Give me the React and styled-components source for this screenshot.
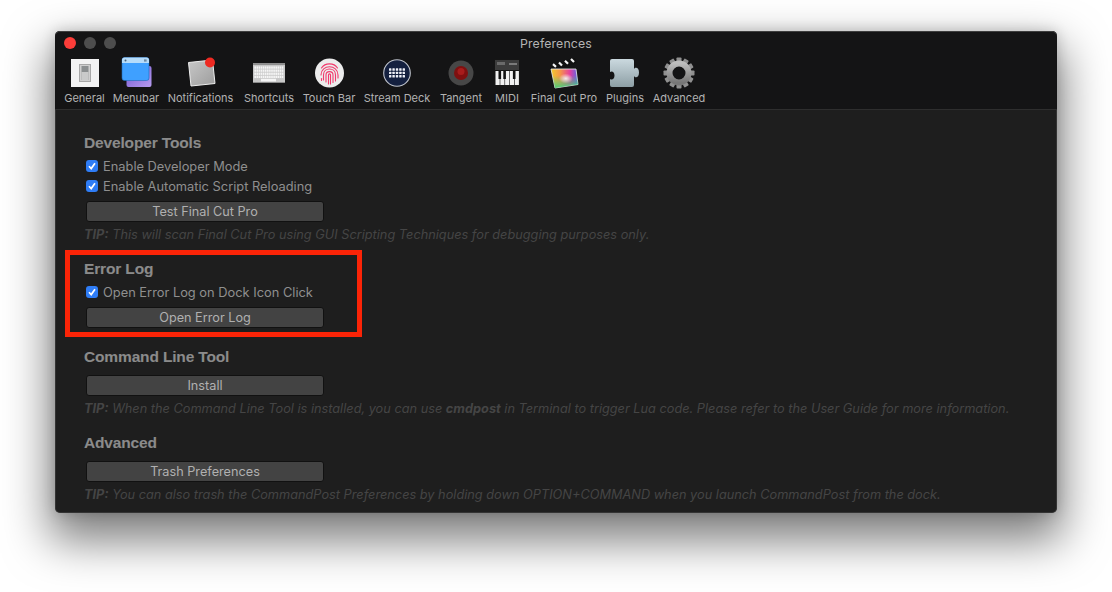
import React from "react";
import styled, { createGlobalStyle } from "styled-components";

const Global = createGlobalStyle`
  html, body { margin: 0; padding: 0; background: #fff; overflow: hidden; }
  body { font-family: "Inter", "Liberation Sans", sans-serif; }
`;
const Page = styled.div`
  width: 1112px; height: 592px; padding: 31px 0 0 55px; box-sizing: border-box; overflow: hidden;
`;
const Window = styled.div`
  position: relative; width: 1002px; height: 482px; border-radius: 5px; background: #1e1e1e;
  box-shadow: inset 0 0 0 1px rgba(80,80,80,.45), 0 22px 45px 6px rgba(0,0,0,.5), 0 0 14px rgba(0,0,0,.18);
  display: flex; flex-direction: column; overflow: visible;
`;
const Head = styled.header`
  height: 78px; background: #141415; border-bottom: 1px solid #2e2e2e; border-radius: 5px 5px 0 0;
  box-shadow: inset 0 1px 0 rgba(90,90,90,.6);
  flex: none; display: flex; flex-direction: column; box-sizing: content-box;
`;
const TitleBar = styled.div`
  position: relative; height: 24px; flex: none; display: flex; align-items: center; justify-content: center;
`;
const Title = styled.div`font-size: 12.3px; letter-spacing: .15px; color: #b4b4b4; margin-top: 1px;`;
const Lights = styled.div`position: absolute; left: 9px; top: 6px; display: flex; gap: 8px;`;
const Light = styled.span`width: 12px; height: 12px; border-radius: 50%; background: ${p => p.$c};`;
const Tools = styled.nav`display: flex; height: 54px;`;
const Tool = styled.div`
  width: ${p => p.$w}px; flex: none; display: flex; flex-direction: column; align-items: center;
  position: relative;
`;
const IconSlot = styled.div`
  height: 32px; width: 36px; margin-top: 2px; display: flex; align-items: center; justify-content: center; flex: none;
`;
const ToolLabel = styled.div`
  margin-top: 3px; font-size: 11px; line-height: 13px; color: #b2b2b2; white-space: nowrap;
`;
const Body = styled.main`
  flex: 1; padding: 23px 0 0 29px; position: relative; min-height: 0;
`;
const Section = styled.section`
  height: ${p => p.$h}px; display: flex; flex-direction: column; align-items: flex-start;
`;
const Heading = styled.h2`
  margin: 0 0 4px; font-size: 15.5px; line-height: 19px; font-weight: 700; color: #8b8b8b; letter-spacing: -.15px;
  font-family: "Liberation Sans", sans-serif; -webkit-text-stroke: .1px #8b8b8b;
`;
const CheckRow = styled.label`
  height: 20px; display: flex; align-items: center; gap: 5px; padding-left: 2px; flex: none;
  font-size: 12.85px; color: #8f8f8f;
`;
const Box = styled.span`
  width: 12px; height: 12px; border-radius: 3px; background: #2f7df6; display: flex; align-items: center; justify-content: center; flex: none;
`;
const Button = styled.button`
  margin: 5px 0 0 2px; width: 238px; height: 21px; padding: 0; flex: none; box-sizing: border-box;
  border: 1px solid #111; border-radius: 3px; background: #434343; color: #b0b0b0;
  font: 12.7px "Inter", "Liberation Sans", sans-serif; line-height: 18px; text-align: center;
`;
const Tip = styled.p`
  margin: 5px 0 0; font-size: 12.75px; line-height: 15px; font-style: italic; color: #454545; white-space: nowrap;
  font-family: "Inter", "Liberation Sans", sans-serif;
  b { font-weight: 700; }
`;
const Callout = styled.div`
  position: absolute; left: 10px; top: 140px; width: 297px; height: 87px; box-sizing: border-box;
  border: 5px solid #fb2407; pointer-events: none;
`;

const Check = () => (
  <svg width="10" height="10" viewBox="0 0 10 10"><path d="M2 5.2 4.2 7.6 8 2.2" fill="none" stroke="#fff" strokeWidth="1.7" /></svg>
);

const General = () => (
  <svg width="28" height="28" viewBox="0 0 28 28">
    <rect width="28" height="28" x="0" y="0" fill="#f3f3f3" />
    <rect x="8.5" y="5.5" width="11" height="17" fill="#cfcfcf" stroke="#a8a8a8" />
    <rect x="10.5" y="7" width="7" height="14" fill="#8b8f90" />
    <rect x="10.5" y="13" width="7" height="8" fill="#c9caca" />
  </svg>
);
const Menubar = () => (
  <svg width="32" height="32" viewBox="-1.5 0 32 32">
    <defs>
      <linearGradient id="mb1" x1="0" y1="0" x2="1" y2="1"><stop offset="0" stopColor="#7457d0" /><stop offset="1" stopColor="#b79cf0" /></linearGradient>
    </defs>
    <rect x="5" y="9" width="25" height="21" rx="2" fill="url(#mb1)" />
    <rect x="0.5" y="0.5" width="27" height="23" rx="2.5" fill="#3fa0ff" stroke="#1e69b5" strokeWidth=".6" />
    <path d="M.5 3A2.500 2.500 0 0 1 3 .5h22A2.500 2.500 0 0 1 27.500 3v3H.5z" fill="#b6dcfa" />
    <circle cx="4" cy="3.500" r="1" fill="#45617a" />
    <rect x="22.500" y="2.400" width="2.600" height="2.200" fill="#6b8aa5" />
  </svg>
);
const Notifications = () => (
  <svg width="32" height="32" viewBox="-1 0 32 32">
    <defs>
      <linearGradient id="n1" x1="0" y1="0" x2="1" y2="1"><stop offset="0" stopColor="#c8c8c8" /><stop offset="1" stopColor="#9c9c9c" /></linearGradient>
    </defs>
    <path d="M2.500 5.500 26.500 3 29 26.500 5 29z" fill="url(#n1)" stroke="#eee" strokeWidth="1" />
    <circle cx="24" cy="5.500" r="5" fill="#ee2a22" />
  </svg>
);
const Keyboard = () => (
  <svg width="32" height="22" viewBox="0 0 32 22">
    <rect x="0" y="1" width="32" height="20" rx="1" fill="#c8c8c8" />
    <rect x="0" y="1" width="32" height="2" fill="#8f8f8f" />
    {[0, 1, 2, 3].map(r => Array.from({ length: 14 }).map((_, c) => (
      <rect key={`${r}-${c}`} x={1.4 + c * 2.1} y={4.4 + r * 3.1} width="1.6" height="2.3" fill="#f5f5f5" />
    )))}
    <rect x="8" y="16.800" width="15" height="2.600" fill="#f5f5f5" />
    <rect x="0" y="20" width="32" height="1" fill="#8a8a8a" />
  </svg>
);
const TouchBar = () => (
  <svg width="32" height="30" viewBox="-1.5 0 32 30">
    <circle cx="15" cy="15" r="14.500" fill="#ececec" />
    <g fill="none" stroke="#f23a6d" strokeWidth="1.1" strokeLinecap="round">
      <path d="M7 10c3.500-5.500 12.500-5.500 16 0" />
      <path d="M6.500 17c0-11 17-11 17 0v3" />
      <path d="M9 22v-5c0-8 12-8 12 0v6" />
      <path d="M11.500 24v-7c0-4.500 7-4.500 7 0v7.500" />
      <path d="M14 26v-9c0-1.500 2-1.500 2 0v9" />
      <path d="M7 20.500v2" />
    </g>
  </svg>
);
const StreamDeck = () => (
  <svg width="28" height="28" viewBox="0 0 28 28">
    <circle cx="14" cy="14" r="13.300" fill="#14203f" stroke="#bfc3cb" strokeWidth="1.100" />
    {[0, 1, 2].map(r => [0, 1, 2, 3, 4].map(c => (
      <rect key={`${r}${c}`} x={6 + c * 3.4} y={9.300 + r * 3.400} width="2.400" height="2.400" rx=".5" fill="#eef0f7" />
    )))}
  </svg>
);
const Tangent = () => (
  <svg width="26" height="26" viewBox="0 0 26 26">
    <circle cx="13" cy="13" r="12.500" fill="#474747" />
    <circle cx="13" cy="13" r="7" fill="#7f1010" />
    <circle cx="13" cy="11.500" r="3.500" fill="#a81c1c" />
  </svg>
);
const Midi = () => (
  <svg width="26" height="28" viewBox="0 0 26 28">
    <rect width="26" height="28" fill="#151515" />
    <rect x="1" y="1" width="24" height="10" fill="#3c3c3c" />
    <rect x="3" y="3" width="8" height="3" fill="#6a6a6a" />
    <rect x="15" y="4" width="8" height="2" fill="#7a7a7a" />
    {[0, 1, 2, 3, 4].map(i => <rect key={i} x={1.5 + i * 4.8} y="12" width="4.200" height="14" fill="#f1f1f1" />)}
    {[0, 1, 3].map(i => <rect key={i} x={4.500 + i * 4.800} y="12" width="2.600" height="8" fill="#111" />)}
  </svg>
);
const Fcp = () => (
  <svg width="30" height="32" viewBox="0 0 30 32">
    <defs>
      <linearGradient id="f1" x1="0" y1="0" x2="1" y2="0">
        <stop offset="0" stopColor="#f2c92c" /><stop offset=".35" stopColor="#f5934a" /><stop offset=".7" stopColor="#e43fa0" /><stop offset="1" stopColor="#5468e8" />
      </linearGradient>
      <linearGradient id="f3" x1="0" y1="0" x2="0" y2="1">
        <stop offset=".35" stopColor="#46d07a" stopOpacity="0" /><stop offset="1" stopColor="#46d07a" stopOpacity=".95" />
      </linearGradient>
      <radialGradient id="f2" cx=".55" cy=".5" r=".26"><stop offset="0" stopColor="#fff" stopOpacity=".85" /><stop offset="1" stopColor="#fff" stopOpacity="0" /></radialGradient>
    </defs>
    <path d="M1 8 26 1l1.500 5.500-25 7z" fill="#111" />
    <path d="M4 7.200 7 9.800M10 5.500l3 3M16 3.800l3 3M22 2l3 3" stroke="#f3f3f3" strokeWidth="2.200" />
    <path d="M2 12h25l2 15.500L6 31z" fill="url(#f1)" stroke="#f2f2f2" strokeWidth=".8" />
    <path d="M2 12h25l2 15.500L6 31z" fill="url(#f3)" />
    <path d="M2 12h25l2 15.500L6 31z" fill="url(#f2)" />
  </svg>
);
const Plugins = () => (
  <svg width="32" height="28" viewBox="0 0 32 28">
    <defs>
      <linearGradient id="p1" x1="0" y1="0" x2="0" y2="1"><stop offset="0" stopColor="#cbd9df" /><stop offset="1" stopColor="#8d9fa5" /></linearGradient>
    </defs>
    <path d="M3 0h20a2 2 0 0 1 2 2v8c1-2 5-2 5 3.500S26 19 25 17v9a2 2 0 0 1-2 2H3a2 2 0 0 1-2-2v-6c2 1.500 4.500 0 4.500-3.500S3 11.500 1 13V2a2 2 0 0 1 2-2z" fill="url(#p1)" />
  </svg>
);
const Gear = () => {
  const teeth = Array.from({ length: 12 }, (_, i) => i * 30);
  return (
    <svg width="32" height="32" viewBox="0 0 32 32">
      <defs>
        <linearGradient id="g1" x1="0" y1="0" x2="0" y2="1"><stop offset="0" stopColor="#bdbdbd" /><stop offset="1" stopColor="#777" /></linearGradient>
      </defs>
      {teeth.map(a => <rect key={a} x="13.500" y="0.500" width="5" height="6" rx=".8" fill="#909090" transform={`rotate(${a} 16 16)`} />)}
      <circle cx="16" cy="16" r="9.500" fill="none" stroke="url(#g1)" strokeWidth="6" />
    </svg>
  );
};

const tools = [
  ["General", 59, <General />], ["Menubar", 44, <Menubar />], ["Notifications", 85, <Notifications />],
  ["Shortcuts", 52, <Keyboard />], ["Touch Bar", 68, <TouchBar />], ["Stream Deck", 68, <StreamDeck />],
  ["Tangent", 60, <Tangent />], ["MIDI", 32, <Midi />], ["Final Cut Pro", 82, <Fcp />],
  ["Plugins", 40, <Plugins />], ["Advanced", 68, <Gear />],
];

export default function App() {
  return (
    <Page>
      <Global />
      <Window>
        <Head>
          <TitleBar>
            <Lights>
              <Light $c="#fc3d39" /><Light $c="#4d4d4d" /><Light $c="#4d4d4d" />
            </Lights>
            <Title>Preferences</Title>
          </TitleBar>
          <Tools>
            {tools.map(([name, w, icon]) => (
              <Tool key={name} $w={w}>
                <IconSlot>{icon}</IconSlot>
                <ToolLabel>{name}</ToolLabel>
              </Tool>
            ))}
          </Tools>
        </Head>
        <Body>
          <Section $h={126}>
            <Heading>Developer Tools</Heading>
            <CheckRow><Box><Check /></Box>Enable Developer Mode</CheckRow>
            <CheckRow><Box><Check /></Box>Enable Automatic Script Reloading</CheckRow>
            <Button>Test Final Cut Pro</Button>
            <Tip><b>TIP:</b> This will scan Final Cut Pro using GUI Scripting Techniques for debugging purposes only.</Tip>
          </Section>
          <Section $h={88}>
            <Heading>Error Log</Heading>
            <CheckRow><Box><Check /></Box>Open Error Log on Dock Icon Click</CheckRow>
            <Button>Open Error Log</Button>
          </Section>
          <Section $h={86}>
            <Heading>Command Line Tool</Heading>
            <Button>Install</Button>
            <Tip><b>TIP:</b> When the Command Line Tool is installed, you can use <b>cmdpost</b> in Terminal to trigger Lua code. Please refer to the User Guide for more information.</Tip>
          </Section>
          <Section $h={70}>
            <Heading>Advanced</Heading>
            <Button>Trash Preferences</Button>
            <Tip><b>TIP:</b> You can also trash the CommandPost Preferences by holding down OPTION+COMMAND when you launch CommandPost from the dock.</Tip>
          </Section>
          <Callout />
        </Body>
      </Window>
    </Page>
  );
}
